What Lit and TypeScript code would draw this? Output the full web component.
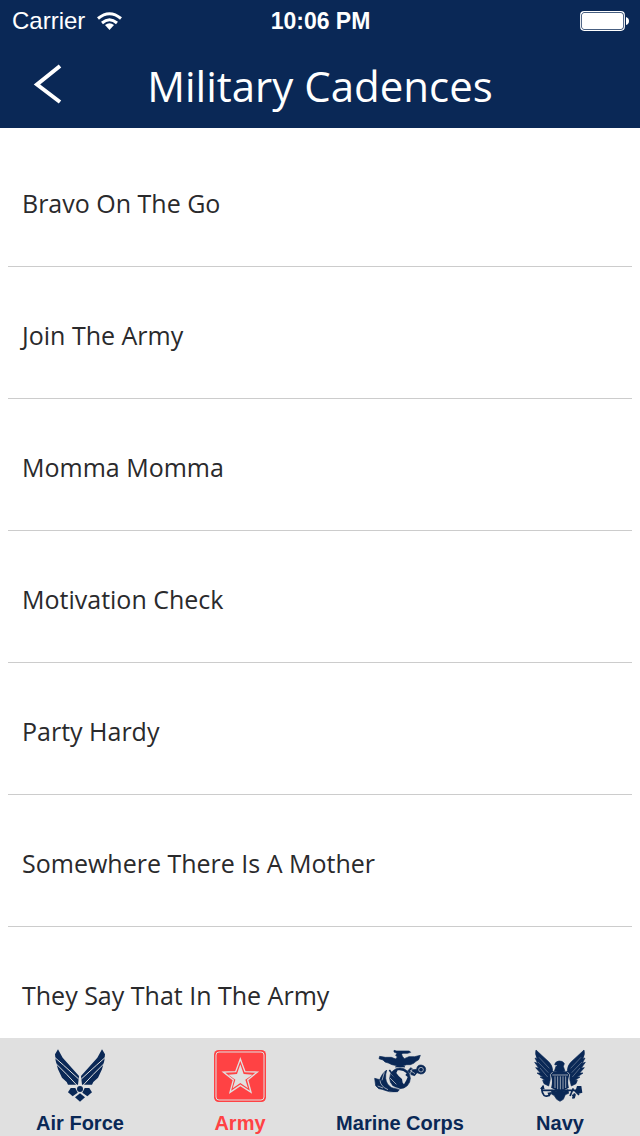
import { LitElement, html, css, svg } from "lit";
import { customElement, property, state } from "lit/decorators.js";
import { classMap } from "lit/directives/class-map.js";

const wing = svg`
  <path d="M54 28L68 53L117 108L114 134H84L80 126L66 113L54 88L47 62L45 43Z"/>
  <path class="line" d="M44 52L70 75L116 117M47 70L80 103L111 136"/>`;

const airForce = svg`
  <g>${wing}</g>
  <g transform="matrix(-1 0 0 1 240 0)">
    <path d="M54 28L68 53L117 108L114 134H84L80 126L66 113L54 88L47 62L45 43Z"/>
    <path class="line" d="M44 52L70 75L116 117M47 70L80 103L111 136"/>
  </g>
  <circle cx="120" cy="147" r="9"/>
  <path d="M92 144H106L113 158L98 169L84 157Z"/>
  <path d="M148 144H134L127 158L142 169L156 157Z"/>
  <path d="M120 160L135 172L120 185L105 172Z"/>`;

const army = svg`
  <rect x="42" y="30" width="156" height="156" rx="14"/>
  <rect class="line" x="48" y="36" width="144" height="144" rx="9"/>
  <path class="line thick" d="M121 57L135 95L172 96L143 120L153 157L121 136L90 157L100 120L70 96L107 95Z"/>
  <path class="paper" d="M121 73L131 102L158 104L136 119L144 145L121 129L98 145L106 119L85 104L111 102Z"/>`;

const marines = svg`
  <g class="bold">
    <path d="M102 31L110 33H148L152 37L143 40H128L125 44L128 50L133 56L147 50L164 50L181 46L176 59L168 64L161 70L151 74L140 74L130 77L135 81H106L111 77L96 74L85 69L75 66L69 60L57 56L59 49L76 52H94L107 57L112 51L107 46L111 40L102 36Z"/>
    <circle cx="120" cy="115" r="31"/>
    <path d="M80 90Q66 100 59 119L44 115L47 137L56 146L66 148Q88 159 113 155L118 149L95 143Q79 134 77 115Q76 103 80 90Z"/>
    <path d="M143 93L152 83L161 89L170 88Q171 75 183 75Q197 77 197 89Q195 102 182 102L171 98L164 107L154 104Z"/>
  </g>
  <path class="paper" d="M113 91Q128 88 140 100L136 105L143 111L139 121L132 133L128 128L126 117L116 108L109 99Z"/>
  <path class="line fine" d="M89 92Q74 116 97 139L119 147M60 121Q61 139 84 149M73 97L66 121M53 138L69 144"/>
  <circle class="line fine" cx="183" cy="89" r="7"/>
  <path class="line fine" d="M94 103L119 128M90 114L109 133M150 91L165 101M157 86L151 101"/>
  <path class="ink-line" d="M88 90L127 141"/>`;

const navy = svg`
  <g class="bold">
    <path d="M48 30Q66 47 86 65Q97 75 98 91L92 114L86 138L72 131L68 121L75 121L60 111L68 111L51 99L61 99L47 83L56 84L44 67L53 70L45 54L52 57Q44 42 48 30Z"/>
    <path d="M192 30Q174 47 154 65Q143 75 142 91L148 114L154 138L168 131L172 121L165 121L180 111L172 111L189 99L179 99L193 83L184 84L196 67L187 70L195 54L188 57Q196 42 192 30Z"/>
    <path d="M104 73Q107 64 117 63Q129 62 133 71L130 79L135 94H103L108 79Z"/>
    <path d="M95 150L108 154L120 149L132 154L144 149L146 160L136 164L130 178L120 184L110 178L102 166L94 162Z"/>
  </g>
  <path d="M94 92Q107 97 120 91Q133 97 146 92L149 103Q142 121 147 143Q134 151 120 153Q106 151 93 143Q99 121 91 103Z"/>
  <path class="line fine" d="M104 76L111 77M98 96L91 104Q98 127 92 144M142 96L149 104Q142 127 148 144"/>
  <path class="line fine" d="M97 105H144M105 109V144M113 109V148M121 109V149M129 109V148M137 109V144"/>
  <path class="ink-line" d="M64 151H178M70 138Q60 150 72 166Q82 173 90 162M160 145L150 168M164 160L158 176M165 153L177 165"/>
  <path d="M70 134L60 146L74 148ZM82 158L95 156L89 170ZM171 138H184L187 158L174 162L166 154ZM154 164L168 163L164 176Z"/>
  <path class="line faint" d="M57 52L88 85M54 66L85 98M60 84L83 111M183 52L152 85M186 66L155 98M180 84L157 111"/>`;

const tabs = [
  { name: "Air Force", icon: airForce },
  { name: "Army", icon: army },
  { name: "Marine Corps", icon: marines },
  { name: "Navy", icon: navy },
];

const cadences = [
  "Bravo On The Go",
  "Join The Army",
  "Momma Momma",
  "Motivation Check",
  "Party Hardy",
  "Somewhere There Is A Mother",
  "They Say That In The Army",
];

@customElement("status-bar")
class StatusBar extends LitElement {
  static styles = css`
    :host {
      display: grid;
      grid-template-columns: 1fr auto 1fr;
      align-items: center;
      height: 40px;
      padding: 0 11px 0 12px;
      font: 24px/42px "Liberation Sans", Arial, sans-serif;
      color: #fff;
    }
    .network { display: flex; align-items: center; gap: 12px; }
    .time { font-weight: 700; font-size: 23px; }
    .battery { justify-self: end; }
    svg { display: block; }
  `;
  render() {
    return html`
      <span class="network">Carrier
        <svg width="25" height="19" viewBox="0 0 25 19" fill="none" stroke="#fff" stroke-width="3">
          <path d="M1 6.500Q12.500 -3 24 6.500M5 11Q12.500 4.500 20 11" />
          <path d="M8 13Q12.500 9.500 17 13L12.500 18Z" fill="#fff" stroke="none" />
        </svg>
      </span>
      <span class="time">10:06 PM</span>
      <svg class="battery" width="49" height="20" viewBox="0 0 49 20">
        <rect x=".7" y=".7" width="43.600" height="18.600" rx="3.500" fill="none" stroke="#fff" stroke-width="1.200" />
        <rect x="2" y="2" width="41" height="16" rx="2" fill="#fff" />
        <path d="M46 6Q49 7 49 10T46 14Z" fill="#fff" />
      </svg>
    `;
  }
}

@customElement("tab-bar")
class TabBar extends LitElement {
  @property() selected = "Army";

  static styles = css`
    :host { display: block; background: #e0e0e0; }
    nav { display: grid; grid-template-columns: repeat(4, 1fr); }
    button {
      display: flex;
      flex-direction: column;
      align-items: center;
      gap: 5px;
      padding: 8px 0 1px;
      border: 0;
      background: none;
      color: #0a2856;
      font: 700 20px/24px "Liberation Sans", Arial, sans-serif;
      white-space: nowrap;
    }
    .active { color: #ff4244; }
    svg { display: block; width: 60px; height: 60px; fill: currentColor; }
    .paper { fill: #e0e0e0; }
    .line { fill: none; stroke: #e0e0e0; stroke-width: 3; }
    .thick { stroke-width: 4; }
    .fine { stroke-width: 2; }
    .faint { stroke-width: 2; opacity: 0.5; }
    .bold { stroke: currentColor; stroke-width: 2; }
    .ink-line { fill: none; stroke: currentColor; stroke-width: 5; }
  `;
  private pick(name: string) {
    this.dispatchEvent(new CustomEvent("pick", { detail: name }));
  }
  render() {
    return html`<nav>
      ${tabs.map(
        (t) => html`<button
          class=${classMap({ active: t.name === this.selected })}
          @click=${() => this.pick(t.name)}
        >
          <svg viewBox="30 18 180 180" aria-hidden="true">${t.icon}</svg>
          <span>${t.name}</span>
        </button>`
      )}
    </nav>`;
  }
}

@customElement("app-root")
class AppRoot extends LitElement {
  @state() private branch = "Army";

  static styles = css`
    :host {
      display: flex;
      flex-direction: column;
      height: 100vh;
      background: #fff;
      color: #2a2a2c;
      font-family: "Open Sans", "Noto Sans", sans-serif;
    }
    header { flex: none; background: #0a2856; color: #fff; }
    .title-bar {
      display: grid;
      grid-template-columns: 80px 1fr 80px;
      align-items: center;
      padding-top: 4px;
    }
    .back {
      display: flex;
      justify-content: flex-end;
      padding: 0 16px 4px 0;
      border: 0;
      background: none;
      color: inherit;
    }
    h1 {
      margin: 0;
      font-size: 42px;
      font-weight: 400;
      line-height: 84px;
      text-align: center;
      white-space: nowrap;
    }
    ul {
      flex: 1;
      min-height: 0;
      margin: 0;
      padding: 7px 8px 0;
      overflow: auto;
      scrollbar-width: none;
      list-style: none;
    }
    li { border-bottom: 1px solid #ccc; }
    .row {
      display: block;
      padding: 50px 14px 45px;
      color: inherit;
      font-size: 25px;
      line-height: 36px;
      text-decoration: none;
    }
    tab-bar { flex: none; }
  `;
  render() {
    return html`
      <header>
        <status-bar></status-bar>
        <div class="title-bar">
          <button class="back" aria-label="Back">
            <svg width="32" height="42" viewBox="0 0 32 42" fill="none" stroke="#fff" stroke-width="4">
              <path d="M28 3L5 21.500L28 39" />
            </svg>
          </button>
          <h1>Military Cadences</h1>
        </div>
      </header>
      <ul>
        ${cadences.map((c) => html`<li><a class="row" href="#">${c}</a></li>`)}
      </ul>
      <tab-bar
        .selected=${this.branch}
        @pick=${(e: CustomEvent) => (this.branch = e.detail)}
      ></tab-bar>
    `;
  }
}
